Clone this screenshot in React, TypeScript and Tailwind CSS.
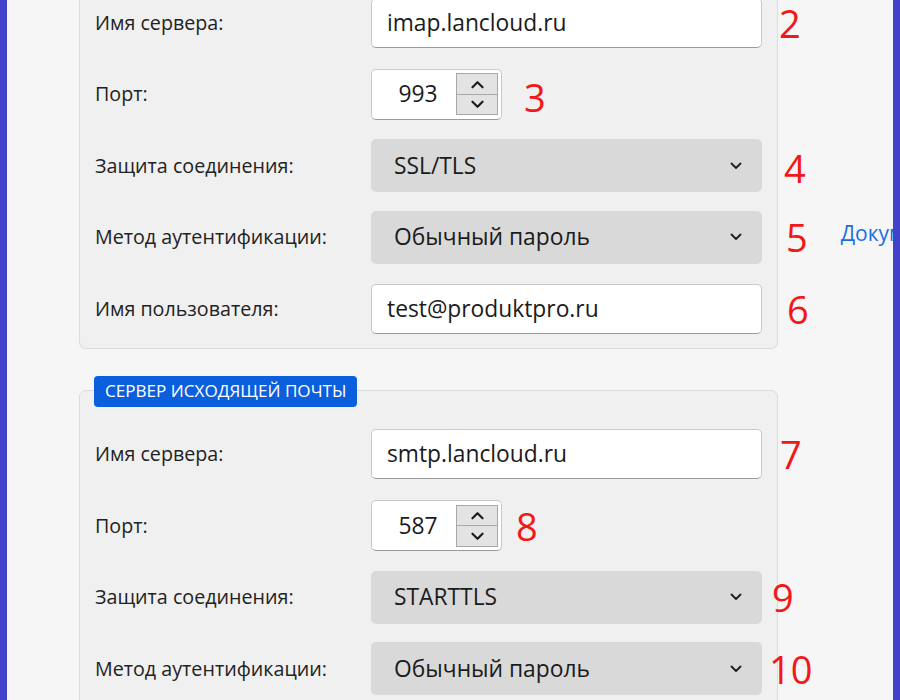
import React from 'react';

const FONT = "font-['Open_Sans',sans-serif]";

function Chevron({ up = false, className = '' }: { up?: boolean; className?: string }) {
  return (
    <svg viewBox="0 0 12 8" className={className} fill="none" stroke="currentColor" strokeWidth={1.9} strokeLinecap="round" strokeLinejoin="round">
      {up ? <path d="M1.5 6.5 6 2l4.5 4.5" /> : <path d="M1.5 1.5 6 6l4.5-4.5" />}
    </svg>
  );
}

function Mark({ n, className }: { n: string; className: string }) {
  return <span className={`shrink-0 text-[38px] leading-none text-[#f21818] ${className}`}>{n}</span>;
}

function TextBox({ value }: { value: string }) {
  return (
    <div className="shrink-0 w-[391px] h-[50px] flex items-center px-[15px] bg-white border border-[#c9c9c9] border-b-[#9a9a9a] rounded-[5px] text-[22.8px] text-[#1b1b1b]">
      {value}
    </div>
  );
}

function Spinner({ value }: { value: string }) {
  return (
    <div className="shrink-0 w-[131px] h-[51px] flex items-center bg-white border border-[#c9c9c9] border-b-[#9a9a9a] rounded-[5px] pr-[3px]">
      <div className="flex-1 text-center text-[22.8px] text-[#1b1b1b] pl-[8px]">{value}</div>
      <div className="w-[42px] h-[42px] flex flex-col border border-[#a8a8a8] bg-[#e3e3e3]">
        <div className="flex-1 flex items-center justify-center border-b border-[#a8a8a8] text-[#1b1b1b]">
          <Chevron up className="w-[15px] h-[9px]" />
        </div>
        <div className="flex-1 flex items-center justify-center text-[#1b1b1b]">
          <Chevron className="w-[15px] h-[9px]" />
        </div>
      </div>
    </div>
  );
}

function Select({ value }: { value: string }) {
  return (
    <div className="shrink-0 w-[391px] h-[53px] flex items-center justify-between pl-[23px] pr-[20px] bg-[#d9d9d9] rounded-[5px] text-[22.8px] text-[#1b1b1b]">
      <span>{value}</span>
      <Chevron className="w-[12px] h-[8px] text-[#222]" />
    </div>
  );
}

function Row({ label, children }: { label: string; children: React.ReactNode }) {
  return (
    <div className="h-[71.5px] flex items-center whitespace-nowrap">
      <div className="w-[276px] shrink-0 text-[19.7px] text-[#222]">{label}</div>
      {children}
    </div>
  );
}

export default function App() {
  return (
    <div className={`w-[900px] h-[700px] flex overflow-hidden ${FONT}`}>
      <div className="w-[7px] shrink-0 bg-[#4141cc]" />
      <div className="flex-1 bg-[#f6f6f6] overflow-hidden">
        <div className="ml-[72px] w-[699px] -mt-[14px] pt-[1px]">
          {/* incoming server */}
          <div className="border border-[#dcdcdc] border-t-0 rounded-b-[7px] bg-[#f0f0f0] pl-[15px] pb-[3px]">
            <Row label="Имя сервера:">
              <TextBox value="imap.lancloud.ru" />
              <Mark n="2" className="ml-[17px]" />
            </Row>
            <Row label="Порт:">
              <Spinner value="993" />
              <Mark n="3" className="ml-[22px] mt-[6px]" />
            </Row>
            <Row label="Защита соединения:">
              <Select value="SSL/TLS" />
              <Mark n="4" className="ml-[22px] mt-[5px]" />
            </Row>
            <Row label="Метод аутентификации:">
              <Select value="Обычный пароль" />
              <Mark n="5" className="ml-[24px]" />
              <span className="shrink-0 ml-[33px] -mt-[8px] text-[21px] text-[#1a6ee0]">Документация</span>
            </Row>
            <Row label="Имя пользователя:">
              <TextBox value="test@produktpro.ru" />
              <Mark n="6" className="ml-[25px]" />
            </Row>
          </div>

          {/* outgoing server */}
          <div className="relative mt-[41px] border border-[#dcdcdc] rounded-[7px] bg-[#f0f0f0] pl-[15px] pt-[28px] pb-[20px]">
            <span className="absolute -top-[15px] left-[14px] h-[31px] px-[11px] flex items-center rounded-[4px] bg-[#0b5fdc] text-white text-[17.1px]">
              СЕРВЕР ИСХОДЯЩЕЙ ПОЧТЫ
            </span>
            <Row label="Имя сервера:">
              <TextBox value="smtp.lancloud.ru" />
              <Mark n="7" className="ml-[18px]" />
            </Row>
            <Row label="Порт:">
              <Spinner value="587" />
              <Mark n="8" className="ml-[14px]" />
            </Row>
            <Row label="Защита соединения:">
              <Select value="STARTTLS" />
              <Mark n="9" className="ml-[10px]" />
            </Row>
            <Row label="Метод аутентификации:">
              <Select value="Обычный пароль" />
              <Mark n="10" className="ml-[7px]" />
            </Row>
          </div>
        </div>
      </div>
      <div className="w-[7px] shrink-0 bg-[#4141cc]" />
    </div>
  );
}
